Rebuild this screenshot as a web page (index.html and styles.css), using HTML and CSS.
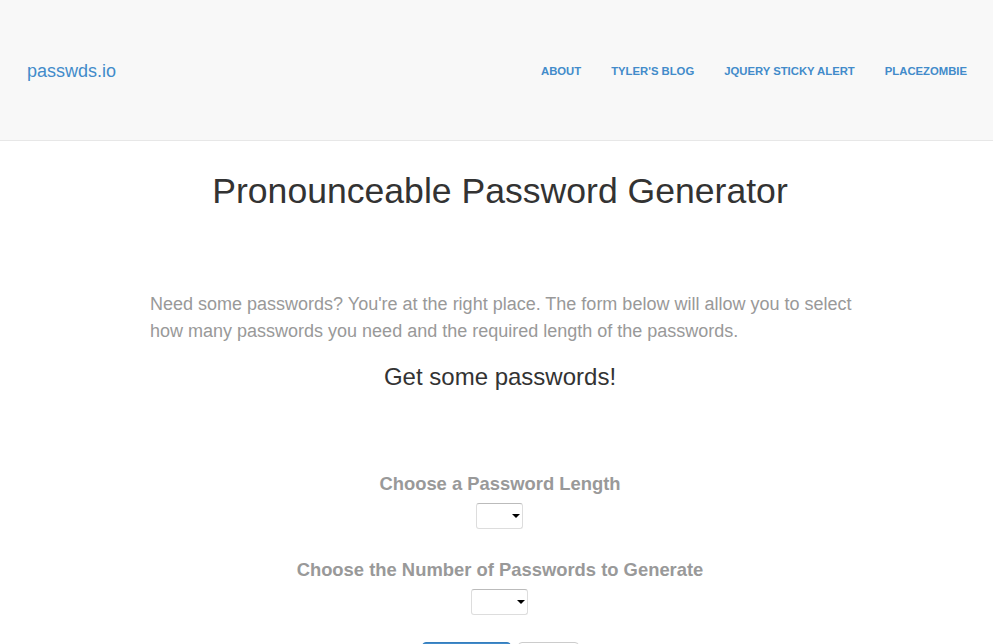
FILE: index.html
```html
<!DOCTYPE html>
<html>
<head>
<meta charset="utf-8">
<title>passwds.io</title>
<link rel="stylesheet" href="styles.css">
</head>
<body>
<header class="navbar">
  <a class="brand" href="#">passwds.io</a>
  <nav class="nav">
    <a href="#">About</a>
    <a href="#">Tyler's Blog</a>
    <a href="#">jQuery Sticky Alert</a>
    <a href="#">PlaceZombie</a>
  </nav>
</header>
<main class="main">
  <h1 class="title">Pronounceable Password Generator</h1>
  <p class="lead">Need some passwords? You're at the right place. The form below will allow you to select how many passwords you need and the required length of the passwords.</p>
  <h2 class="sub">Get some passwords!</h2>
  <form class="form">
    <div class="group">
      <label class="label">Choose a Password Length</label>
      <span class="select narrow"><select></select></span>
    </div>
    <div class="group">
      <label class="label">Choose the Number of Passwords to Generate</label>
      <span class="select wide"><select></select></span>
    </div>
    <div class="actions">
      <button type="button" class="btn primary">Generate</button>
      <button type="button" class="btn plain">Clear</button>
    </div>
  </form>
</main>
</body>
</html>
```
FILE: styles.css
```css
* { box-sizing: border-box; }
html, body { margin: 0; padding: 0; }
body {
  font-family: "Liberation Sans", Arial, sans-serif;
  color: #333;
  background: #fff;
  overflow: hidden;
}
.navbar {
  height: 141px;
  background: #f8f8f8;
  border-bottom: 1px solid #e7e7e7;
  display: flex;
  align-items: center;
  justify-content: space-between;
  padding: 1px 11px 0 27px;
}
.brand {
  font-size: 18px;
  color: #428bca;
  text-decoration: none;
  line-height: 20px;
}
.nav { display: flex; }
.nav a {
  font-size: 11.3px;
  font-weight: bold;
  text-transform: uppercase;
  color: #428bca;
  text-decoration: none;
  padding: 0 15px;
  line-height: 20px;
}
.nav a:first-child { padding-left: 17px; }
.main {
  width: 700px;
  margin-left: 150px;
  text-align: center;
}
.title {
  font-size: 35.6px;
  font-weight: normal;
  line-height: 40px;
  margin: 30px -60px 0;
}
.lead {
  font-size: 18px;
  line-height: 27px;
  color: #999;
  text-align: left;
  margin: 80px -8px 0 0;
}
.sub {
  font-size: 24px;
  font-weight: normal;
  line-height: 26px;
  margin: 19px 0 0;
}
.form { margin-top: 82px; }
.group { display: flex; flex-direction: column; align-items: center; }
.group + .group { margin-top: 29px; }
.label {
  font-size: 18.4px;
  font-weight: bold;
  color: #999;
  line-height: 24px;
  margin-bottom: 7px;
}
.select {
  position: relative;
  display: block;
  height: 26px;
}
.select.narrow { width: 47px; margin-left: -2px; }
.select.wide { width: 57px; margin-left: -2px; }
.select select {
  appearance: none;
  -webkit-appearance: none;
  width: 100%;
  height: 100%;
  border: 1px solid #ddd;
  border-top-color: #bbb;
  border-radius: 3px;
  background: #fff;
  margin: 0;
}
.select::after {
  content: "";
  position: absolute;
  right: 3px;
  top: 11px;
  border-left: 4px solid transparent;
  border-right: 4px solid transparent;
  border-top: 4px solid #000;
  pointer-events: none;
}
.actions {
  margin-top: 27px;
  display: flex;
  justify-content: center;
  gap: 7px;
  padding-left: 1px;
}
.btn {
  font-family: inherit;
  font-size: 14px;
  line-height: 16px;
  height: 34px;
  border-radius: 4px;
  padding: 14px 12px 2px;
}
.primary {
  width: 89px;
  background: #428bca;
  border: 1px solid #357ebd;
  color: #fff;
}
.plain {
  width: 61px;
  background: #fff;
  border: 1px solid #ccc;
  color: #333;
}
```
